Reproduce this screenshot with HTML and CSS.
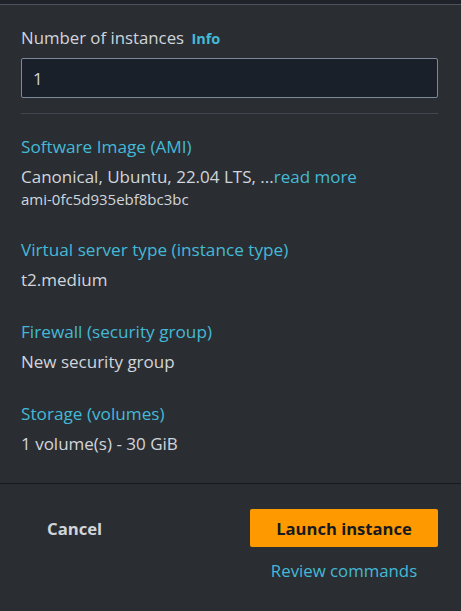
FILE: index.html
```html
<!DOCTYPE html>
<html lang="en">
<head>
<meta charset="utf-8">
<title>Summary</title>
<link rel="stylesheet" href="styles.css">
</head>
<body>
<div class="topbar"></div>
<main class="panel">
  <div class="field">
    <div class="field-label">Number of instances <a class="info" href="#">Info</a></div>
    <div class="input"><span>1</span></div>
  </div>
  <hr class="divider">
  <section class="item">
    <a class="item-title" href="#">Software Image (AMI)</a>
    <div class="item-value">Canonical, Ubuntu, 22.04 LTS, ...<a class="more" href="#">read more</a></div>
    <div class="item-sub">ami-0fc5d935ebf8bc3bc</div>
  </section>
  <section class="item">
    <a class="item-title" href="#">Virtual server type (instance type)</a>
    <div class="item-value">t2.medium</div>
  </section>
  <section class="item">
    <a class="item-title" href="#">Firewall (security group)</a>
    <div class="item-value">New security group</div>
  </section>
  <section class="item">
    <a class="item-title" href="#">Storage (volumes)</a>
    <div class="item-value">1 volume(s) - 30 GiB</div>
  </section>
</main>
<footer class="footer">
  <button class="btn-cancel" type="button">Cancel</button>
  <div class="actions">
    <button class="btn-primary" type="button">Launch instance</button>
    <a class="review" href="#">Review commands</a>
  </div>
</footer>
</body>
</html>
```
FILE: styles.css
```css
* { box-sizing: border-box; }
html, body {
  margin: 0;
  padding: 0;
  background: #2a2e33;
  font-family: "Open Sans", "Noto Sans", sans-serif;
  color: #d1d5db;
}
body { width: 461px; height: 611px; overflow: hidden; }
a { text-decoration: none; color: #44b9d6; }

.topbar {
  height: 5px;
  background: #1f2329;
  border-bottom: 1px solid #4b525b;
}

.panel {
  padding: 22px 23px 0 21px;
  height: 479px;
  border-bottom: 1px solid #16191e;
}

.field-label {
  font-size: 16.8px;
  line-height: 22px;
  color: #d1d5db;
}
.info {
  font-size: 14.5px;
  font-weight: 700;
  margin-left: 3px;
}
.input {
  margin-top: 8px;
  height: 40px;
  background: #1a2029;
  border: 1px solid #7d8998;
  border-radius: 2px;
  padding: 0 11px;
  display: flex;
  align-items: center;
  font-size: 17px;
  color: #d1d5db;
}

.divider {
  border: 0;
  border-top: 1px solid #414750;
  margin: 15px 0 0 0;
  height: 0;
}

.item { margin-top: 22px; }
.item + .item { margin-top: 30px; }
.item-title {
  display: block;
  font-size: 17.2px;
  line-height: 22px;
}
.item-value {
  margin-top: 8px;
  font-size: 17px;
  line-height: 22px;
}
.item-sub {
  margin-top: 2px;
  font-size: 15px;
  line-height: 19px;
}

.footer {
  padding: 25px 23px 0 21px;
  display: flex;
  justify-content: space-between;
  align-items: flex-start;
}
.btn-cancel {
  background: none;
  border: 0;
  font-family: inherit;
  font-size: 16.7px;
  font-weight: 700;
  color: #d1d5db;
  height: 38px;
  padding: 0 26px;
}
.actions {
  display: flex;
  flex-direction: column;
  align-items: center;
  width: 188px;
}
.btn-primary {
  width: 188px;
  height: 38px;
  background: #ff9900;
  border: 0;
  border-radius: 2px;
  font-family: inherit;
  font-size: 16.6px;
  font-weight: 700;
  color: #16191f;
}
.review {
  margin-top: 13px;
  font-size: 16.8px;
  line-height: 22px;
}
```
